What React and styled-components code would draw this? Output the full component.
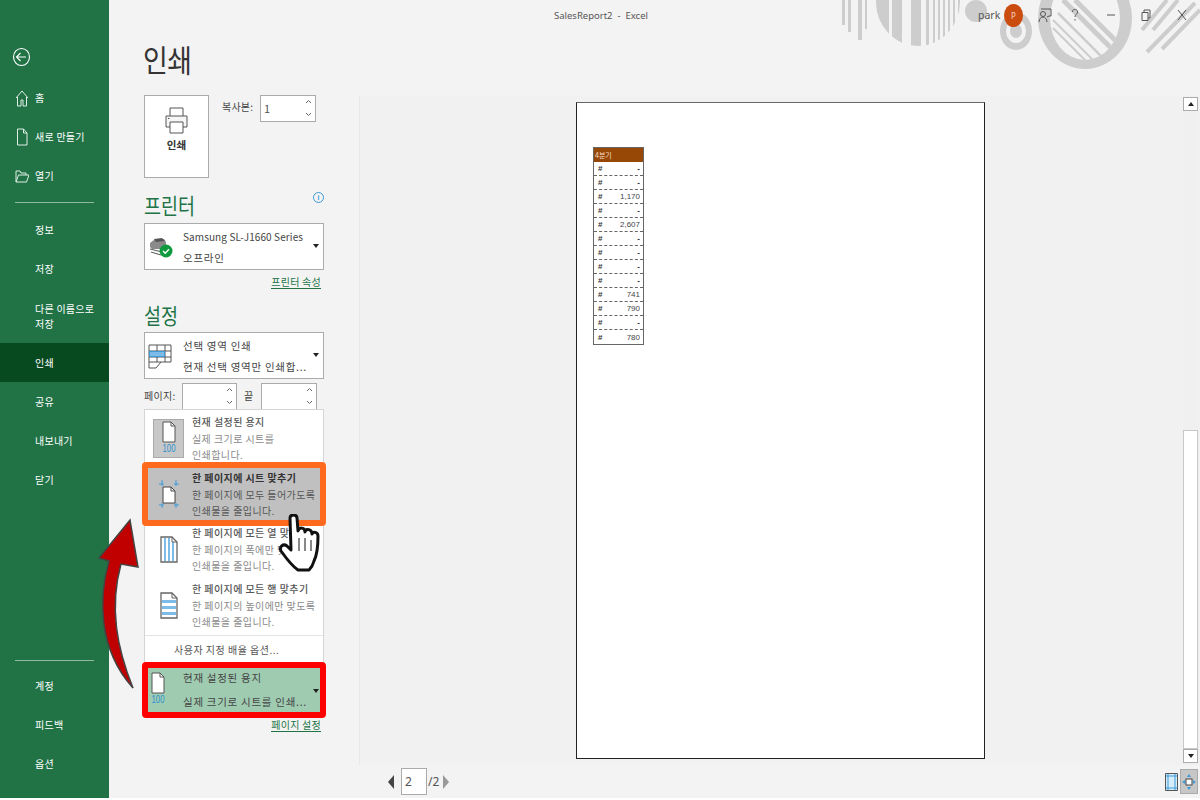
import React from 'react';
import styled, { createGlobalStyle } from 'styled-components';

const GlobalStyle = createGlobalStyle`
  html, body { margin: 0; padding: 0; }
  body { font-family: 'Noto Sans CJK KR', 'Noto Sans', sans-serif; color: #444; background: #f3f3f3; }
`;

const Window = styled.div`
  position: relative;
  width: 1200px;
  height: 798px;
  display: flex;
  overflow: hidden;
  background: #f3f3f3;
  border-bottom: 2px solid #fff;
`;

const Sidebar = styled.nav`
  width: 109px;
  flex: none;
  background: #217346;
  color: #fff;
  display: flex;
  flex-direction: column;
  padding-top: 44px;
`;

const BackButton = styled.div`
  height: 26px;
  padding-left: 12px;
  margin-bottom: 8px;
`;

const NavGroup = styled.div`
  display: flex;
  flex-direction: column;
`;

const NavItem = styled.div`
  height: ${(p) => (p.$tall ? 55 : 39)}px;
  display: flex;
  align-items: center;
  gap: 6px;
  padding-left: ${(p) => (p.$icon ? 15 : 35)}px;
  padding-right: 8px;
  font-size: 10px;
  line-height: 15px;
  letter-spacing: 0.25px;
  background: ${(p) => (p.$active ? '#074a20' : 'transparent')};
  box-sizing: border-box;
`;

const NavIcon = styled.svg`
  width: 14px;
  height: 18px;
  flex: none;
  fill: none;
  stroke: #dfeee5;
  stroke-width: 1;
`;

const NavRule = styled.div`
  height: 1px;
  margin: ${(p) => p.$margin};
  background: #8fb9a2;
`;

const Main = styled.main`
  flex: 1;
  min-width: 0;
  display: flex;
  flex-direction: column;
  position: relative;
`;

const Decoration = styled.svg`
  position: absolute;
  top: 0;
  left: 711px;
  width: 380px;
  height: 80px;
  fill: #cdcdcd;
`;

const TitleBar = styled.header`
  position: relative;
  height: 30px;
  flex: none;
  display: flex;
  align-items: center;
  padding-left: 445px;
  font-family: 'Noto Sans', sans-serif;
  font-size: 9.5px;
  color: #555;
`;

const DocTitle = styled.div`
  width: 424px;
  flex: none;
  white-space: pre;
`;

const UserName = styled.div`
  font-size: 10.5px;
  width: 21px;
  color: #555;
`;

const Avatar = styled.div`
  width: 19px;
  height: 23px;
  border-radius: 50%;
  background: #ca4c0f;
  color: #f6d9c8;
  font-size: 8px;
  display: flex;
  align-items: center;
  justify-content: center;
  margin-left: 5px;
`;

const WinIcon = styled.svg`
  width: 14px;
  height: 14px;
  flex: none;
  fill: none;
  stroke: #555;
  stroke-width: 1;
  margin-left: ${(p) => p.$gap}px;
`;

const Body = styled.div`
  flex: 1;
  display: flex;
  min-height: 0;
`;

const LeftPanel = styled.section`
  width: 251px;
  flex: none;
  box-sizing: border-box;
  padding-left: 35px;
  position: relative;
`;

const PageTitle = styled.h1`
  margin: 0 0 0 -1px;
  height: 65px;
  font-size: 27px;
  line-height: 60px;
  font-weight: 400;
  letter-spacing: -0.5px;
  color: #333;
  transform: scaleY(1.14);
  transform-origin: left center;
`;

const CopyRow = styled.div`
  display: flex;
  gap: 13px;
  align-items: flex-start;
`;

const PrintButton = styled.div`
  width: 65px;
  height: 83px;
  box-sizing: border-box;
  background: #fff;
  border: 1px solid #ababab;
  display: flex;
  flex-direction: column;
  align-items: center;
  gap: 3px;
  padding-top: 11px;
  font-size: 10.5px;
  font-weight: 700;
  color: #333;
`;

const CopyLabel = styled.div`
  width: 30px;
  font-size: 10px;
  line-height: 24px;
  letter-spacing: 0.2px;
  margin-right: -5px;
  white-space: nowrap;
`;

const Spinner = styled.div`
  position: relative;
  flex: none;
  width: ${(p) => p.$width}px;
  height: ${(p) => p.$height}px;
  box-sizing: border-box;
  background: #fff;
  border: 1px solid #ababab;
  padding-left: 3px;
  font-size: 11px;
  line-height: 25px;
  color: #555;
`;

const SpinArrows = styled.svg`
  position: absolute;
  top: 3px;
  right: 3px;
  width: 7px;
  height: 18px;
  fill: none;
  stroke: #666;
  stroke-width: 1;
`;

const SectionTitle = styled.h2`
  margin: 0;
  font-size: 18.5px;
  font-weight: 400;
  line-height: 26px;
  color: #217346;
  display: flex;
  justify-content: space-between;
  width: 180px;
  padding-top: ${(p) => p.$top}px;
  padding-bottom: ${(p) => p.$bottom}px;
`;

const TitleText = styled.span`
  display: inline-block;
  transform: scaleY(1.14);
`;

const InfoDot = styled.div`
  width: 11px;
  height: 11px;
  box-sizing: border-box;
  border: 1px solid #3d9bd9;
  border-radius: 50%;
  color: #3d9bd9;
  font-size: 7px;
  line-height: 9px;
  text-align: center;
  font-weight: 700;
  font-family: 'Liberation Sans', sans-serif;
`;

const Select = styled.div`
  position: relative;
  width: 180px;
  height: 47px;
  box-sizing: border-box;
  display: flex;
  align-items: center;
  background: ${(p) => (p.$selected ? '#9fcbb1' : '#fff')};
  border: 1px solid #ababab;
  ${(p) => p.$selected && 'outline: 6px solid #f00; outline-offset: -4px; border-radius: 2px;'}
`;

const SelectIcon = styled.div`
  width: 38px;
  flex: none;
  box-sizing: border-box;
  padding-left: 3px;
  display: flex;
`;

const SelectText = styled.div`
  font-size: 10.5px;
  line-height: 21px;
  letter-spacing: 0.72px;
  color: #444;
  white-space: nowrap;
`;

const LatinLine = styled.div`
  font-size: 10px;
  letter-spacing: 0.1px;
`;

const Caret = styled.div`
  position: absolute;
  right: 4px;
  top: 20px;
  border-left: 3px solid transparent;
  border-right: 3px solid transparent;
  border-top: 4px solid #222;
`;

const LinkRow = styled.div`
  width: 177px;
  height: ${(p) => p.$height}px;
  display: flex;
  justify-content: flex-end;
  align-items: center;
`;

const SetupLink = styled.span`
  font-size: 10px;
  line-height: 13px;
  letter-spacing: 0.25px;
  color: #217346;
  border-bottom: 1px solid #217346;
`;

const PageRange = styled.div`
  height: 30px;
  display: flex;
  align-items: flex-start;
  font-size: 10px;
  line-height: 26px;
  padding-top: 4px;
  box-sizing: border-box;
  overflow: hidden;
`;

const RangeLabel = styled.span`
  width: ${(p) => p.$width}px;
  flex: none;
  box-sizing: border-box;
  padding-left: ${(p) => p.$pad || 0}px;
  letter-spacing: 0.3px;
`;

const Menu = styled.div`
  width: 180px;
  height: 254px;
  box-sizing: border-box;
  background: #fff;
  border: 1px solid #d5d5d5;
  display: flex;
  flex-direction: column;
  position: relative;
`;

const MenuItem = styled.div`
  height: ${(p) => p.$height}px;
  flex: none;
  box-sizing: border-box;
  display: flex;
  padding-top: ${(p) => p.$top}px;
  background: ${(p) => (p.$hot ? '#c0c0c0' : 'transparent')};
  ${(p) => p.$hot && `
    position: relative;
    z-index: 1;
    margin: 0 -1px;
    padding-left: 1px;
    outline: 6px solid #ff6a1f;
    outline-offset: -4px;
    border-radius: 2px;
  `}
`;

const ItemIcon = styled.div`
  width: 47px;
  flex: none;
  display: flex;
  justify-content: center;
  padding-top: ${(p) => p.$top}px;
`;

const IconTile = styled.div`
  width: 31px;
  height: 39px;
  box-sizing: border-box;
  background: #c8c8c8;
  border: 1px solid #aaa;
  display: flex;
  justify-content: center;
  align-items: center;
`;

const ItemText = styled.div`
  font-size: 10px;
  line-height: 16.5px;
  letter-spacing: 0.42px;
  white-space: nowrap;
`;

const ItemTitle = styled.div`
  color: ${(p) => (p.$hot ? '#333' : '#555')};
  font-weight: ${(p) => (p.$hot ? 700 : 500)};
`;

const ItemDesc = styled.div`
  color: ${(p) => (p.$hot ? '#555' : '#8a8a8a')};
`;

const MenuRule = styled.div`
  height: 1px;
  background: #e3e3e3;
`;

const CustomOption = styled.div`
  flex: 1;
  display: flex;
  align-items: center;
  padding-left: 29px;
  font-size: 10px;
  letter-spacing: 0.5px;
  color: #555;
`;

const ScaleSelect = styled(Select)`
  margin-top: 1px;
  height: 52px;
  ${SelectIcon} { width: 27px; padding-left: 3px; }
  ${SelectText} { line-height: 24px; padding-left: 11px; }
  ${Caret} { top: 24px; }
`;

const OverlaySvg = styled.svg`
  position: absolute;
  z-index: 2;
  left: ${(p) => p.$x}px;
  top: ${(p) => p.$y}px;
  pointer-events: none;
`;

const Preview = styled.section`
  flex: 1;
  min-width: 0;
  display: flex;
  flex-direction: column;
  padding-top: 66px;
`;

const PreviewTop = styled.div`
  height: 669px;
  flex: none;
  display: flex;
  background: #f1f1f1;
  box-shadow: -1px 0 0 #e8e8e8;
`;

const PageArea = styled.div`
  flex: 1;
  padding: 6px 0 0 216px;
`;

const Sheet = styled.div`
  width: 409px;
  height: 657px;
  box-sizing: border-box;
  background: #fff;
  border: 1px solid #222;
  border-top: 1px solid #666;
  padding: 44px 0 0 16px;
`;

const QuarterTable = styled.div`
  width: 51px;
  border: 1px solid #666;
  box-sizing: border-box;
  font-family: 'Liberation Sans', sans-serif;
  font-size: 8px;
  color: #444;
`;

const TableHead = styled.div`
  height: 14px;
  padding-left: 1px;
  background: #974706;
  color: #f5dcc5;
  font-family: 'Noto Sans CJK KR', sans-serif;
  font-size: 7px;
  line-height: 14px;
`;

const TableRow = styled.div`
  height: 14px;
  box-sizing: border-box;
  display: flex;
  justify-content: space-between;
  align-items: center;
  padding: 0 3px 0 4px;
  border-bottom: 1px dashed #666;
  &:last-child { border-bottom: 0; }
`;

const RowMark = styled.span`
  font-weight: 700;
  color: #333;
`;

const RowValue = styled.span`
  font-weight: ${(p) => (p.$dash ? 700 : 400)};
  color: ${(p) => (p.$dash ? '#222' : '#444')};
`;

const Scrollbar = styled.div`
  width: 15px;
  margin: 0 2px 0 0;
  flex: none;
  display: flex;
  flex-direction: column;
  background: #f0f0f0;
`;

const ScrollButton = styled.div`
  height: 14px;
  margin: ${(p) => (p.$down ? '0 0 2px' : '1px 0 0')};
  box-sizing: border-box;
  background: #fff;
  border: 1px solid #ababab;
  display: flex;
  align-items: center;
  justify-content: center;
  &::after {
    content: '';
    border-left: 3px solid transparent;
    border-right: 3px solid transparent;
    ${(p) => (p.$down ? 'border-top: 4px solid #222;' : 'border-bottom: 4px solid #222;')}
  }
`;

const ScrollTrack = styled.div`
  flex: 1;
  display: flex;
  flex-direction: column;
  justify-content: flex-end;
`;

const ScrollThumb = styled.div`
  height: 319px;
  box-sizing: border-box;
  background: #fff;
  border: 1px solid #c8c8c8;
`;

const PreviewBottom = styled.div`
  flex: 1;
  display: flex;
  align-items: center;
  padding-left: 28px;
  padding-right: 2px;
  font-size: 12px;
  color: #555;
`;

const PagerArrow = styled.div`
  border-top: 7px solid transparent;
  border-bottom: 7px solid transparent;
  ${(p) => (p.$left ? 'border-right: 6px solid #444;' : 'border-left: 6px solid #999;')}
`;

const PagerInput = styled.div`
  width: 26px;
  height: 27px;
  margin-left: 7px;
  box-sizing: border-box;
  border: 1px solid #ababab;
  background: #fff;
  padding-left: 3px;
  line-height: 26px;
  font-family: 'Noto Sans', sans-serif;
`;

const PagerTotal = styled.div`
  width: 15px;
  padding-left: 1px;
  font-family: 'Noto Sans', sans-serif;
`;

const ViewIcons = styled.div`
  margin-left: auto;
  display: flex;
  align-items: center;
  gap: 2px;
`;

const ViewTile = styled.div`
  width: 18px;
  height: 25px;
  box-sizing: border-box;
  display: flex;
  align-items: center;
  justify-content: center;
  background: ${(p) => (p.$active ? '#c6c6c6' : 'transparent')};
  border: ${(p) => (p.$active ? '1px solid #aaa' : '0')};
`;

function PageHundred() {
  return (
    <svg width="20" height="36" viewBox="0 0 20 36">
      <path d="M4 1h8l4 4v16H4z" fill="#fff" stroke="#555" />
      <path d="M12 1v4h4" fill="none" stroke="#555" />
      <text x="10" y="31" textAnchor="middle" fontSize="11" fontFamily="Liberation Sans, sans-serif" fill="#2e8fd0" textLength="13" lengthAdjust="spacingAndGlyphs">100</text>
    </svg>
  );
}

function FitSheetIcon() {
  return (
    <svg width="20" height="28" viewBox="0 0 20 28">
      <path d="M4 7h8l4 4v12H4z" fill="#fff" stroke="#444" />
      <path d="M12 7v4h4" fill="none" stroke="#444" />
      <path d="M0 4h5M3 0v6M15 4h5M17 0v6M0 25h5M3 23v5M15 25h5M17 23v5" fill="none" stroke="#3d9bd9" />
    </svg>
  );
}

function ColumnsIcon() {
  return (
    <svg width="18" height="27" viewBox="0 0 18 27">
      <path d="M1 1h11l5 5v20H1z" fill="#fff" stroke="#666" strokeWidth="1.300" />
      <path d="M4 2h2v23H4zM8 2h2v23H8zM12 6h2v19h-2z" fill="#7dbce8" />
      <path d="M12 1v5h5" fill="none" stroke="#666" />
    </svg>
  );
}

function RowsIcon() {
  return (
    <svg width="18" height="27" viewBox="0 0 18 27">
      <path d="M1 1h11l5 5v20H1z" fill="#fff" stroke="#666" strokeWidth="1.300" />
      <path d="M2 8h14v3H2zM2 14h14v3H2zM2 20h14v3H2z" fill="#7dbce8" />
      <path d="M12 1v5h5" fill="none" stroke="#666" />
    </svg>
  );
}

function PrinterIcon() {
  return (
    <svg width="23" height="27" viewBox="0 0 23 27" fill="none" stroke="#555">
      <path d="M5 10V1h13v9" />
      <path d="M5 20H1V9h21v11h-4" fill="#f6f6f6" />
      <path d="M5 15h13v11H5z" fill="#fff" />
      <path d="M3 11.500h1.500" />
    </svg>
  );
}

function SpinnerArrows() {
  return (
    <SpinArrows viewBox="0 0 7 18">
      <path d="M1 4l2.500-2.500L6 4M1 14l2.500 2.500L6 14" />
    </SpinArrows>
  );
}

const rows = ['-', '-', '1,170', '-', '2,607', '-', '-', '-', '-', '741', '790', '-', '780'];

export default function App() {
  return (
    <Window>
      <GlobalStyle />
      <Sidebar>
        <BackButton>
          <svg width="19" height="26" viewBox="0 0 19 26" fill="none" stroke="#fff" strokeWidth="1.100">
            <ellipse cx="9.500" cy="13" rx="8" ry="8.500" />
            <path d="M5 13h9M8.500 9l-4 4 4 4" />
          </svg>
        </BackButton>
        <NavGroup>
          <NavItem $icon>
            <NavIcon viewBox="0 0 14 18"><path d="M1 9l6-7 6 7M2.500 8v9h3.500v-6h2v6h3.500V8" /></NavIcon>
            홈
          </NavItem>
          <NavItem $icon>
            <NavIcon viewBox="0 0 14 18"><path d="M2.500 1h6l3.500 4v12H2.500zM8.500 1v4H12" /></NavIcon>
            새로 만들기
          </NavItem>
          <NavItem $icon>
            <NavIcon viewBox="0 0 14 18"><path d="M1 15V4h4l1 2h5v2M1 15l2.500-7H14l-2.500 7z" /></NavIcon>
            열기
          </NavItem>
        </NavGroup>
        <NavRule $margin="7px 15px 7px 15px" />
        <NavGroup>
          <NavItem>정보</NavItem>
          <NavItem>저장</NavItem>
          <NavItem $tall>다른 이름으로<br />저장</NavItem>
          <NavItem $active>인쇄</NavItem>
          <NavItem>공유</NavItem>
          <NavItem>내보내기</NavItem>
          <NavItem>닫기</NavItem>
        </NavGroup>
        <NavRule $margin="161px 15px 5px 15px" />
        <NavGroup>
          <NavItem>계정</NavItem>
          <NavItem>피드백</NavItem>
          <NavItem>옵션</NavItem>
        </NavGroup>
      </Sidebar>
      <Main>
        <Decoration viewBox="0 0 380 80">
          <defs>
            <clipPath id="half-disc"><ellipse cx="98" cy="2" rx="42" ry="44" /></clipPath>
            <clipPath id="ring-inside"><ellipse cx="265" cy="18" rx="35" ry="42" /></clipPath>
          </defs>
          <path d="M22 0h3v25h-3zM28 0h3v32h-3zM38 0h4v40h-4zM45 0h2v29h-2z" />
          <g clipPath="url(#half-disc)">
            <path d="M56 0h13v46H56zM72 0h10v46H72zM91 0h10v46H91zM106 0h3v46h-3zM113 0h2v46h-2zM118 0h2v46h-2zM123 0h2v46h-2zM128 0h2v46h-2zM133 0h2v46h-2zM138 0h2v46h-2z" />
          </g>
          <circle cx="156" cy="11" r="11" />
          <path fillRule="evenodd" d="M180 31a16 19 0 1 0 32 0a16 19 0 1 0-32 0zM186 31a10 12 0 1 0 20 0a10 12 0 1 0-20 0z" />
          <ellipse cx="196" cy="31" rx="6" ry="7" />
          <path fillRule="evenodd" d="M218 18a47 51 0 1 0 94 0a47 51 0 1 0-94 0zM230 18a35 42 0 1 0 70 0a35 42 0 1 0-70 0z" />
          <g clipPath="url(#ring-inside)" stroke="#cdcdcd" fill="none">
            <path d="M233 28l50 50M233 20l50 50" strokeWidth="2" />
            <path d="M238 13l50 50" strokeWidth="2.500" />
            <path d="M243 0l50 50M255 0l50 50" strokeWidth="5" />
          </g>
          <g stroke="#cdcdcd" strokeWidth="4" fill="none">
            <path d="M322 30l25-30M333 30l25-30M327 52L375 3M342 49l38-39" />
          </g>
        </Decoration>
        <TitleBar>
          <DocTitle>SalesReport2  -  Excel</DocTitle>
          <UserName>park</UserName>
          <Avatar>P</Avatar>
          <WinIcon $gap={15} viewBox="0 0 14 14">
            <circle cx="5" cy="6" r="2.500" />
            <path d="M1 14c0-3 2-5 4-5s4 2 4 5M3 1h10v7h-2l-2 1" />
          </WinIcon>
          <WinIcon $gap={16} viewBox="0 0 14 14"><path d="M4.500 4c0-4 5.500-3 5 0 0 2-2.500 2.500-2.500 5M7 11v1.500" /></WinIcon>
          <WinIcon $gap={22} viewBox="0 0 14 14"><path d="M3 7h8" /></WinIcon>
          <WinIcon $gap={21} viewBox="0 0 14 14"><path d="M3 4.500h6v8H3zM5 4.500V2h6v8H9" /></WinIcon>
          <WinIcon $gap={22} viewBox="0 0 14 14"><path d="M3 2l8 10M11 2L3 12" /></WinIcon>
        </TitleBar>
        <Body>
          <LeftPanel>
            <PageTitle>인쇄</PageTitle>
            <CopyRow>
              <PrintButton>
                <PrinterIcon />
                <div>인쇄</div>
              </PrintButton>
              <CopyLabel>복사본:</CopyLabel>
              <Spinner $width={56} $height={27}>1<SpinnerArrows /></Spinner>
            </CopyRow>

            <SectionTitle $top={14} $bottom={5}>
              <TitleText>프린터</TitleText>
              <InfoDot>i</InfoDot>
            </SectionTitle>
            <Select>
              <SelectIcon>
                <svg width="26" height="24" viewBox="0 0 26 24">
                  <path d="M2 8l5-4h9l2 3v5l-3 2H4L2 12z" fill="#8a8a8a" />
                  <path d="M2 14l12 3M3 17l10 3" stroke="#555" fill="none" />
                  <path d="M6 4l8-1 3 3-9 1z" fill="#555" />
                  <circle cx="18" cy="16" r="6.500" fill="#0f9a3d" />
                  <path d="M15 16l2.200 2.200 3.800-4" stroke="#fff" strokeWidth="1.400" fill="none" />
                </svg>
              </SelectIcon>
              <SelectText>
                <LatinLine>Samsung SL-J1660 Series</LatinLine>
                오프라인
              </SelectText>
              <Caret />
            </Select>
            <LinkRow $height={24}><SetupLink>프린터 속성</SetupLink></LinkRow>

            <SectionTitle $top={8} $bottom={4}><TitleText>설정</TitleText></SectionTitle>
            <Select>
              <SelectIcon>
                <svg width="24" height="28" viewBox="0 0 24 28" fill="none" stroke="#555">
                  <path d="M1 3h22v17H1z" fill="#fff" />
                  <path d="M1 9h22M1 15h22M9 3v17M17 3v17M1 20v6h7l5-6" />
                  <path d="M1.500 9.500h15v5h-15z" fill="#7dbce8" stroke="#3d9bd9" />
                </svg>
              </SelectIcon>
              <SelectText>선택 영역 인쇄<br />현재 선택 영역만 인쇄합...</SelectText>
              <Caret />
            </Select>
            <PageRange>
              <RangeLabel $width={38}>페이지:</RangeLabel>
              <Spinner $width={55} $height={30}><SpinnerArrows /></Spinner>
              <RangeLabel $width={24} $pad={7}>끝</RangeLabel>
              <Spinner $width={56} $height={30}><SpinnerArrows /></Spinner>
            </PageRange>

            <Menu>
              <MenuItem $height={54} $top={4}>
                <ItemIcon $top={5}><IconTile><PageHundred /></IconTile></ItemIcon>
                <ItemText>
                  <ItemTitle>현재 설정된 용지</ItemTitle>
                  <ItemDesc>실제 크기로 시트를</ItemDesc>
                  <ItemDesc>인쇄합니다.</ItemDesc>
                </ItemText>
              </MenuItem>
              <MenuItem $hot $height={60} $top={6}>
                <ItemIcon $top={10}><FitSheetIcon /></ItemIcon>
                <ItemText>
                  <ItemTitle $hot>한 페이지에 시트 맞추기</ItemTitle>
                  <ItemDesc $hot>한 페이지에 모두 들어가도록</ItemDesc>
                  <ItemDesc $hot>인쇄물을 줄입니다.</ItemDesc>
                </ItemText>
              </MenuItem>
              <MenuItem $height={56} $top={1}>
                <ItemIcon $top={11}><ColumnsIcon /></ItemIcon>
                <ItemText>
                  <ItemTitle>한 페이지에 모든 열 맞추기</ItemTitle>
                  <ItemDesc>한 페이지의 폭에만 맞도록</ItemDesc>
                  <ItemDesc>인쇄물을 줄입니다.</ItemDesc>
                </ItemText>
              </MenuItem>
              <MenuItem $height={55} $top={1}>
                <ItemIcon $top={11}><RowsIcon /></ItemIcon>
                <ItemText>
                  <ItemTitle>한 페이지에 모든 행 맞추기</ItemTitle>
                  <ItemDesc>한 페이지의 높이에만 맞도록</ItemDesc>
                  <ItemDesc>인쇄물을 줄입니다.</ItemDesc>
                </ItemText>
              </MenuItem>
              <MenuRule />
              <CustomOption>사용자 지정 배율 옵션...</CustomOption>
            </Menu>
            <ScaleSelect $selected>
              <SelectIcon><PageHundred /></SelectIcon>
              <SelectText>현재 설정된 용지<br />실제 크기로 시트를 인쇄...</SelectText>
              <Caret />
            </ScaleSelect>
            <LinkRow $height={18}><SetupLink>페이지 설정</SetupLink></LinkRow>

            <OverlaySvg $x={-12} $y={488} width="44" height="172" viewBox="0 0 44 172">
              <path
                d="M33 2L2 40l10 3C2 78 0 130 36 170 20 130 12 90 24 46l17 3z"
                fill="#c00000"
                stroke="#444"
                strokeWidth="1.500"
              />
            </OverlaySvg>
            <OverlaySvg $x={169} $y={484} width="42" height="58" viewBox="0 0 42 58">
              <path
                d="M12 4c0-4 7-4 7 0l1 13c1-4 7-4 7 1 1-4 7-3 7 2 1-3 6-2 6 2 0 10-1 19-4 25-1 4-3 7-5 9H20C14 52 8 44 3 37c-2-4 2-8 6-5l4 4z"
                fill="#fff"
                stroke="#111"
                strokeWidth="3"
                strokeLinejoin="round"
              />
              <path d="M21 24v13M27 24v13M33 26v11" stroke="#111" strokeWidth="1" fill="none" />
            </OverlaySvg>
          </LeftPanel>

          <Preview>
            <PreviewTop>
              <PageArea>
                <Sheet>
                  <QuarterTable>
                    <TableHead>4분기</TableHead>
                    {rows.map((value, i) => (
                      <TableRow key={i}>
                        <RowMark>#</RowMark>
                        <RowValue $dash={value === '-'}>{value}</RowValue>
                      </TableRow>
                    ))}
                  </QuarterTable>
                </Sheet>
              </PageArea>
              <Scrollbar>
                <ScrollButton />
                <ScrollTrack><ScrollThumb /></ScrollTrack>
                <ScrollButton $down />
              </Scrollbar>
            </PreviewTop>
            <PreviewBottom>
              <PagerArrow $left />
              <PagerInput>2</PagerInput>
              <PagerTotal>/2</PagerTotal>
              <PagerArrow />
              <ViewIcons>
                <svg width="13" height="18" viewBox="0 0 13 18">
                  <path d="M.5.5h12v17H.5z" fill="#d7ecfa" stroke="#555" />
                  <path d="M3 1v16M10 1v16M1 3h11M1 15h11" stroke="#3d9bd9" fill="none" />
                </svg>
                <ViewTile $active>
                  <svg width="14" height="18" viewBox="0 0 14 18">
                    <rect x="4" y="6" width="6" height="6" fill="#fff" stroke="#444" />
                    <path d="M7 1l2 3H5zM7 17l2-3H5zM0 9l3-2v4zM14 9l-3-2v4z" fill="#3d9bd9" />
                  </svg>
                </ViewTile>
              </ViewIcons>
            </PreviewBottom>
          </Preview>
        </Body>
      </Main>
    </Window>
  );
}
